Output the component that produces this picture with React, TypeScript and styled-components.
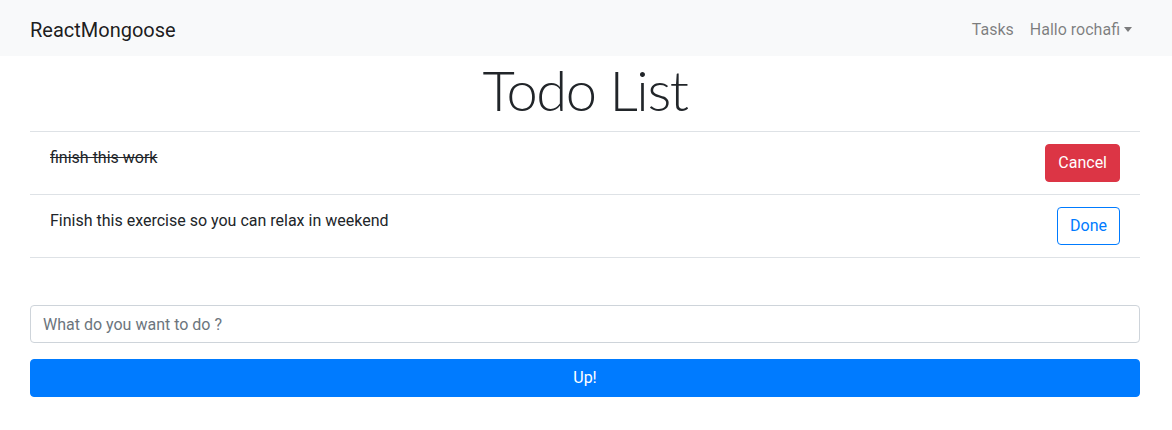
import styled, { createGlobalStyle } from "styled-components";

const GlobalStyle = createGlobalStyle`
  body {
    margin: 0;
    font-family: Roboto, "Noto Sans", sans-serif;
    font-size: 16px;
    line-height: 1.5;
    color: #212529;
    background: #fff;
  }
  * { box-sizing: border-box; }
`;

const Navbar = styled.nav`
  background-color: #f8f9fa;
  height: 56px;
`;
const Container = styled.div`
  max-width: 1142px;
  margin: 0 auto;
  padding: 0 17px 0 15px;
`;
const NavInner = styled(Container)`
  height: 100%;
  display: flex;
  align-items: center;
  justify-content: space-between;
  padding-top: 3px;
`;
const Brand = styled.a`
  font-size: 20px;
  color: rgba(0, 0, 0, 0.9);
  text-decoration: none;
`;
const NavLinks = styled.ul`
  display: flex;
  list-style: none;
  margin: 0;
  padding: 0;
`;
const NavLink = styled.a<{ $dropdown?: boolean }>`
  display: block;
  padding: 8px;
  color: rgba(0, 0, 0, 0.5);
  text-decoration: none;
  &::after {
    content: ${(p) => (p.$dropdown ? '""' : "none")};
    display: inline-block;
    margin-left: 4px;
    vertical-align: 3px;
    border-top: 5px solid;
    border-left: 4.5px solid transparent;
    border-right: 4.5px solid transparent;
  }
`;
const Title = styled.h1`
  margin: 0 0 8px;
  text-align: center;
  font-family: Lato, Roboto, sans-serif;
  font-size: 56px;
  font-weight: 300;
  line-height: 1.2;
  letter-spacing: -1.4px;
`;
const List = styled.ul`
  list-style: none;
  margin: 0 0 47px;
  padding: 0;
  border-bottom: 1px solid #dee2e6;
`;
const Item = styled.li`
  display: flex;
  justify-content: space-between;
  align-items: flex-start;
  padding: 12px 20px;
  border-top: 1px solid #dee2e6;
`;
const ItemText = styled.span<{ $done?: boolean }>`
  margin-top: 2px;
  text-decoration: ${(p) => (p.$done ? "line-through" : "none")};
`;
const Button = styled.button<{ $variant: "danger" | "outline" | "primary"; $block?: boolean }>`
  font: inherit;
  line-height: 1.5;
  padding: 6px 12px;
  border-radius: 4px;
  cursor: pointer;
  width: ${(p) => (p.$block ? "100%" : "auto")};
  border: 1px solid
    ${(p) => (p.$variant === "danger" ? "#dc3545" : "#007bff")};
  background: ${(p) =>
    p.$variant === "danger" ? "#dc3545" : p.$variant === "primary" ? "#007bff" : "#fff"};
  color: ${(p) => (p.$variant === "outline" ? "#007bff" : "#fff")};
`;
const Input = styled.input`
  display: block;
  width: 100%;
  height: 38px;
  padding: 6px 12px;
  font: inherit;
  color: #495057;
  border: 1px solid #ced4da;
  border-radius: 4px;
  margin-bottom: 16px;
  &::placeholder {
    color: #6c757d;
  }
`;

export default function App() {
  return (
    <>
      <GlobalStyle />
      <Navbar>
        <NavInner>
          <Brand href="#">ReactMongoose</Brand>
          <NavLinks>
            <li>
              <NavLink href="#">Tasks</NavLink>
            </li>
            <li>
              <NavLink href="#" $dropdown>
                Hallo rochafi
              </NavLink>
            </li>
          </NavLinks>
        </NavInner>
      </Navbar>
      <Container>
        <Title>Todo List</Title>
        <List>
          <Item>
            <ItemText $done>finish this work</ItemText>
            <Button $variant="danger">Cancel</Button>
          </Item>
          <Item>
            <ItemText>Finish this exercise so you can relax in weekend</ItemText>
            <Button $variant="outline">Done</Button>
          </Item>
        </List>
        <form onSubmit={(e) => e.preventDefault()}>
          <Input placeholder="What do you want to do ?" />
          <Button $variant="primary" $block type="submit">
            Up!
          </Button>
        </form>
      </Container>
    </>
  );
}
